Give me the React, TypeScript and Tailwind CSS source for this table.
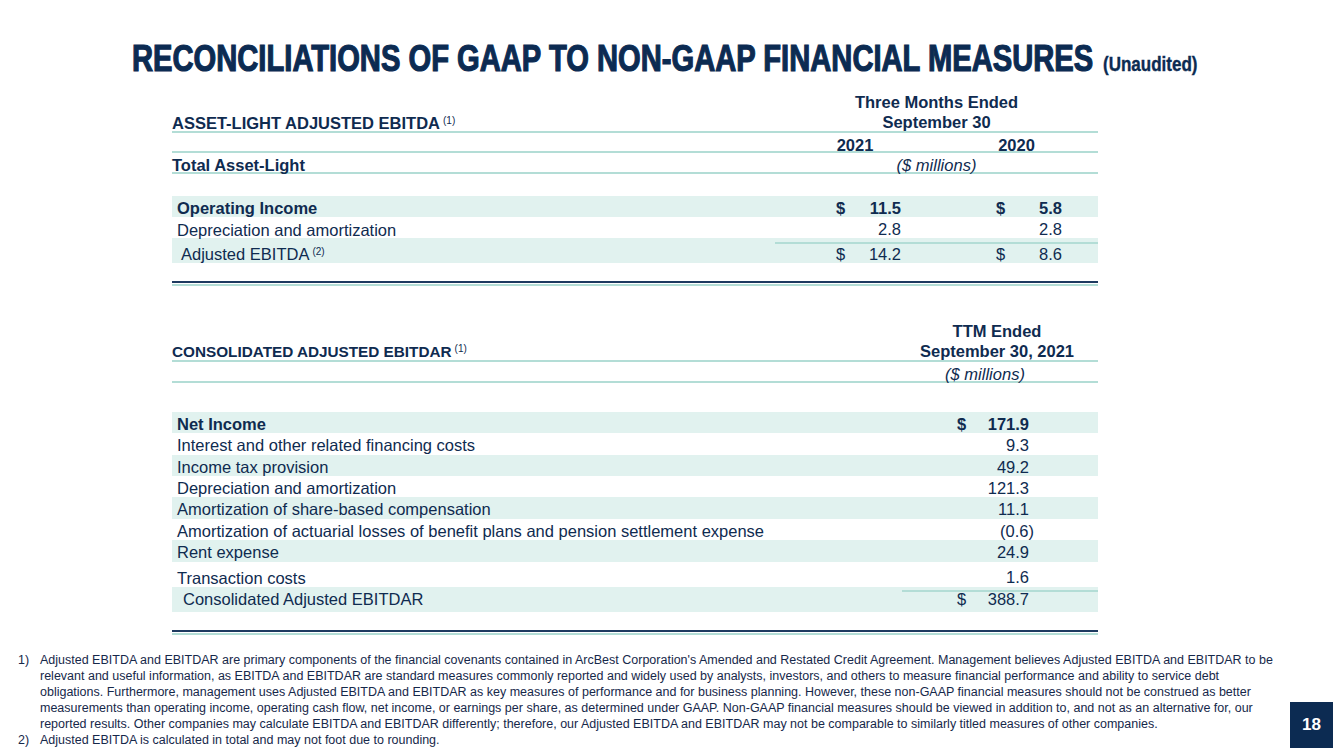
const navy = 'text-[#0f2b50]';

function Sup({ n }: { n: string }) {
  return <sup className="ml-[3px] text-[10px] font-normal">{n}</sup>;
}

function Money({
  sign,
  value,
  bold,
  pl,
  pr,
}: {
  sign?: boolean;
  value: string;
  bold?: boolean;
  pl: string;
  pr: string;
}) {
  return (
    <div className={`flex items-center justify-between ${pl} ${pr} ${bold ? 'font-bold' : ''}`}>
      <span>{sign ? '$' : ''}</span>
      <span>{value}</span>
    </div>
  );
}

const ebitdaRows = [
  { label: 'Operating Income', a: '11.5', b: '5.8', bold: true, sign: true, shade: true, h: 'h-[21px]' },
  { label: 'Depreciation and amortization', a: '2.8', b: '2.8', h: 'h-[21px]', rule: true },
  { label: 'Adjusted EBITDA', a: '14.2', b: '8.6', sign: true, shade: true, h: 'h-[25px]', sup: '(2)', indent: true, low: true },
];

const ebitdarRows = [
  { label: 'Net Income', v: '171.9', bold: true, sign: true, shade: true, h: 'h-[21px]' },
  { label: 'Interest and other related financing costs', v: '9.3', h: 'h-[22px]' },
  { label: 'Income tax provision', v: '49.2', shade: true, h: 'h-[21px]' },
  { label: 'Depreciation and amortization', v: '121.3', h: 'h-[21px]' },
  { label: 'Amortization of share-based compensation', v: '11.1', shade: true, h: 'h-[22px]' },
  { label: 'Amortization of actuarial losses of benefit plans and pension settlement expense', v: '(0.6)', h: 'h-[21px]', paren: true },
  { label: 'Rent expense', v: '24.9', shade: true, h: 'h-[22px]' },
  { label: 'Transaction costs', v: '1.6', h: 'h-[25px]', rule: true, low: true },
  { label: 'Consolidated Adjusted EBITDAR', v: '388.7', sign: true, shade: true, h: 'h-[25px]', indent: true },
];

const notes = [
  "Adjusted EBITDA and EBITDAR are primary components of the financial covenants contained in ArcBest Corporation's Amended and Restated Credit Agreement. Management believes Adjusted EBITDA and EBITDAR to be",
  'relevant and useful information, as EBITDA and EBITDAR are standard measures commonly reported and widely used by analysts, investors, and others to measure financial performance and ability to service debt',
  'obligations. Furthermore, management uses Adjusted EBITDA and EBITDAR as key measures of performance and for business planning. However, these non-GAAP financial measures should not be construed as better',
  'measurements than operating income, operating cash flow, net income, or earnings per share, as determined under GAAP. Non-GAAP financial measures should be viewed in addition to, and not as an alternative for, our',
  'reported results. Other companies may calculate EBITDA and EBITDAR differently; therefore, our Adjusted EBITDA and EBITDAR may not be comparable to similarly titled measures of other companies.',
];

function DoubleRule() {
  return (
    <div className="flex flex-col">
      <div className="h-[2px] bg-[#1e3a60]" />
      <div className="h-[1px]" />
      <div className="h-[2px] bg-[#b3ddd6]" />
    </div>
  );
}

export default function App() {
  return (
    <div
      className={`relative h-[750px] w-[1333px] overflow-hidden bg-white ${navy}`}
      style={{ fontFamily: '"Liberation Sans", Arial, sans-serif' }}
    >
      {/* Title */}
      <div className="h-[89px] overflow-hidden whitespace-nowrap pl-[132px] pt-[41px]">
        <h1 className="inline-block origin-left scale-x-[0.81] text-[36px] leading-[36px] font-bold text-[#0c2b52] [-webkit-text-stroke:1.2px_#0c2b52]">
          RECONCILIATIONS OF GAAP TO NON-GAAP FINANCIAL MEASURES
          <span className="ml-[12px] text-[21px] [-webkit-text-stroke:0.4px_#0c2b52]">(Unaudited)</span>
        </h1>
      </div>

      {/* Asset-Light Adjusted EBITDA */}
      <div className="ml-[172px] w-[926px] text-[16.5px]">
        <div className="grid h-[44px] grid-cols-[603px_323px] border-b-2 border-[#b3ddd6] font-bold">
          <div className="flex translate-y-[2px] items-end leading-[20px]">
            <span>
              ASSET-LIGHT ADJUSTED EBITDA
              <Sup n="(1)" />
            </span>
          </div>
          <div className="flex translate-y-[1px] flex-col items-center justify-end leading-[20px]">
            <span>Three Months Ended</span>
            <span>September 30</span>
          </div>
        </div>
        <div className="grid h-[20px] grid-cols-[603px_160px_163px] items-center border-b-2 border-[#b3ddd6] font-bold">
          <div />
          <div className="text-center">2021</div>
          <div className="text-center">2020</div>
        </div>
        <div className="grid h-[21px] grid-cols-[603px_323px] items-center border-b-2 border-[#b3ddd6]">
          <div className="font-bold">Total Asset-Light</div>
          <div className="text-center italic">($ millions)</div>
        </div>
        <div className="h-[22px]" />
        {ebitdaRows.map((r) => (
          <div
            key={r.label}
            className={`grid grid-cols-[603px_160px_163px] ${r.h} ${r.shade ? 'bg-[#e1f2ef]' : ''}`}
          >
            <div
              className={`flex items-center ${r.low ? 'pt-[4px]' : ''} ${r.indent ? 'pl-[9px]' : 'pl-[5px]'} ${r.bold ? 'font-bold' : ''}`}
            >
              <span>
                {r.label}
                {r.sup && <Sup n={r.sup} />}
              </span>
            </div>
            <div className={`flex flex-col justify-center ${r.low ? 'pt-[4px]' : ''} ${r.rule ? 'border-b-2 border-[#b3ddd6]' : ''}`}>
              <Money sign={r.sign} value={r.a} bold={r.bold} pl="pl-[61px]" pr="pr-[34px]" />
            </div>
            <div className={`flex flex-col justify-center ${r.low ? 'pt-[4px]' : ''} ${r.rule ? 'border-b-2 border-[#b3ddd6]' : ''}`}>
              <Money sign={r.sign} value={r.b} bold={r.bold} pl="pl-[61px]" pr="pr-[36px]" />
            </div>
          </div>
        ))}
        <div className="h-[18px]" />
        <DoubleRule />

        {/* Consolidated Adjusted EBITDAR */}
        <div className="grid h-[76px] grid-cols-[730px_196px] border-b-2 border-[#b3ddd6] font-bold">
          <div className="flex translate-y-[2px] items-end text-[15.3px] leading-[20px]">
            <span>
              CONSOLIDATED ADJUSTED EBITDAR
              <Sup n="(1)" />
            </span>
          </div>
          <div className="flex translate-y-[1px] flex-col items-center justify-end pr-[6px] leading-[20px]">
            <span>TTM Ended</span>
            <span>September 30, 2021</span>
          </div>
        </div>
        <div className="grid h-[21px] grid-cols-[730px_196px] items-center border-b-2 border-[#b3ddd6]">
          <div />
          <div className="pr-[30px] text-center italic">($ millions)</div>
        </div>
        <div className="h-[29px]" />
        {ebitdarRows.map((r) => (
          <div
            key={r.label}
            className={`grid grid-cols-[730px_196px] ${r.h} ${r.shade ? 'bg-[#e1f2ef]' : ''}`}
          >
            <div
              className={`flex items-center ${r.low ? 'pt-[3px]' : ''} ${r.indent ? 'pl-[11px]' : 'pl-[5px]'} ${r.bold ? 'font-bold' : ''}`}
            >
              {r.label}
            </div>
            <div className={`flex flex-col justify-center ${r.low ? 'pt-[3px]' : ''} ${r.rule ? 'border-b-2 border-[#b3ddd6]' : ''}`}>
              <Money sign={r.sign} value={r.v} bold={r.bold} pl="pl-[55px]" pr={r.paren ? 'pr-[64px]' : 'pr-[69px]'} />
            </div>
          </div>
        ))}
        <div className="h-[18px]" />
        <DoubleRule />
      </div>

      {/* Footnotes */}
      <div className="mt-[17px] text-[12.5px] leading-[16px] whitespace-nowrap text-[#16284a]">
        {notes.map((line, i) => (
          <div key={i} className="flex">
            <span className="w-[40px] pl-[18px]">{i === 0 ? '1)' : ''}</span>
            <span>{line}</span>
          </div>
        ))}
        <div className="flex">
          <span className="w-[40px] pl-[18px]">2)</span>
          <span>Adjusted EBITDA is calculated in total and may not foot due to rounding.</span>
        </div>
      </div>

      {/* Page number */}
      <div className="absolute right-0 bottom-[2px] flex h-[46px] w-[43px] items-center justify-center bg-[#0c2b52] text-[17px] font-bold text-white">
        18
      </div>
    </div>
  );
}
